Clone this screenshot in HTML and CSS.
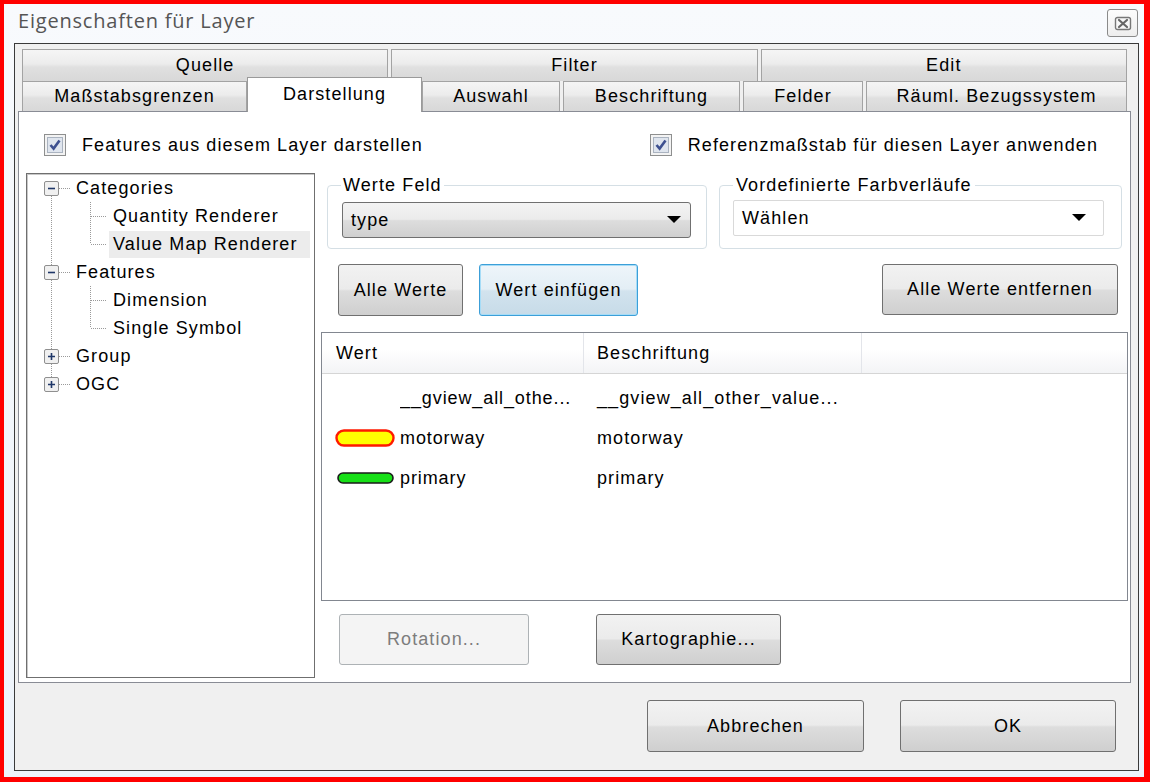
FILE: index.html
```html
<!DOCTYPE html>
<html lang="de">
<head>
<meta charset="utf-8">
<title>Eigenschaften für Layer</title>
<link rel="stylesheet" href="styles.css">
</head>
<body>
<div class="window">
  <div class="titlebar">
    <span class="title">Eigenschaften für Layer</span>
    <div class="close">
      <svg width="18" height="15" viewBox="0 0 18 15"><rect x="1.5" y="1.5" width="15" height="12" rx="2" fill="#f7f7f7" stroke="#777" stroke-width="1.4"/><path d="M5 4 L13 11 M13 4 L5 11" stroke="#666" stroke-width="2.2" stroke-linecap="round"/></svg>
    </div>
  </div>
  <div class="dialog">
    <div class="tabs">
      <div class="tabrow row1">
        <div class="tab">Quelle</div>
        <div class="tab">Filter</div>
        <div class="tab">Edit</div>
      </div>
      <div class="tabrow row2">
        <div class="tab t-mass">Maßstabsgrenzen</div>
        <div class="tab t-dar selected">Darstellung</div>
        <div class="tab t-aus">Auswahl</div>
        <div class="tab t-bes">Beschriftung</div>
        <div class="tab t-fel">Felder</div>
        <div class="tab t-rau">Räuml. Bezugssystem</div>
      </div>
    </div>
    <div class="panel">
      <div class="checks">
        <div class="check">
          <svg class="cb" width="22" height="22" viewBox="0 0 22 22"><rect x="0.5" y="0.5" width="21" height="21" fill="#f3f3f3" stroke="#8e8f8f"/><rect x="3.5" y="3.5" width="15" height="15" fill="#dfe5ee" stroke="#aab3c0"/><path d="M6.5 11 L9.6 14.6 L15.5 6.5" fill="none" stroke="#3d5090" stroke-width="2.6"/></svg>
          <span>Features aus diesem Layer darstellen</span>
        </div>
        <div class="check">
          <svg class="cb" width="22" height="22" viewBox="0 0 22 22"><rect x="0.5" y="0.5" width="21" height="21" fill="#f3f3f3" stroke="#8e8f8f"/><rect x="3.5" y="3.5" width="15" height="15" fill="#dfe5ee" stroke="#aab3c0"/><path d="M6.5 11 L9.6 14.6 L15.5 6.5" fill="none" stroke="#3d5090" stroke-width="2.6"/></svg>
          <span>Referenzmaßstab für diesen Layer anwenden</span>
        </div>
      </div>
      <div class="main">
        <div class="tree">
          <div class="node">
            <svg class="guide top" width="49" height="28" viewBox="0 0 49 28"><path d="M24.5 22 V28 M32 14.5 H44" stroke="#9a9a9a" stroke-dasharray="1 1"/><rect x="17.5" y="7.5" width="14" height="14" rx="1.5" fill="#f0f0f0" stroke="#8f8f8f"/><path d="M21 14.5 H28" stroke="#1f3768" stroke-width="1.6"/></svg>
            <span class="lbl">Categories</span>
          </div>
          <div class="node">
            <svg class="guide child" width="82" height="28" viewBox="0 0 82 28"><path d="M24.5 0 V28 M63.5 0 V28 M64 14.5 H80" stroke="#9a9a9a" stroke-dasharray="1 1"/></svg>
            <span class="lbl sub">Quantity Renderer</span>
          </div>
          <div class="node">
            <svg class="guide child" width="82" height="28" viewBox="0 0 82 28"><path d="M24.5 0 V28 M63.5 0 V14 M64 14.5 H80" stroke="#9a9a9a" stroke-dasharray="1 1"/></svg>
            <span class="lbl sub hl">Value Map Renderer</span>
          </div>
          <div class="node">
            <svg class="guide top" width="49" height="28" viewBox="0 0 49 28"><path d="M24.5 0 V7 M24.5 22 V28 M32 14.5 H44" stroke="#9a9a9a" stroke-dasharray="1 1"/><rect x="17.5" y="7.5" width="14" height="14" rx="1.5" fill="#f0f0f0" stroke="#8f8f8f"/><path d="M21 14.5 H28" stroke="#1f3768" stroke-width="1.6"/></svg>
            <span class="lbl">Features</span>
          </div>
          <div class="node">
            <svg class="guide child" width="82" height="28" viewBox="0 0 82 28"><path d="M24.5 0 V28 M63.5 0 V28 M64 14.5 H80" stroke="#9a9a9a" stroke-dasharray="1 1"/></svg>
            <span class="lbl sub">Dimension</span>
          </div>
          <div class="node">
            <svg class="guide child" width="82" height="28" viewBox="0 0 82 28"><path d="M24.5 0 V28 M63.5 0 V14 M64 14.5 H80" stroke="#9a9a9a" stroke-dasharray="1 1"/></svg>
            <span class="lbl sub">Single Symbol</span>
          </div>
          <div class="node">
            <svg class="guide top" width="49" height="28" viewBox="0 0 49 28"><path d="M24.5 0 V7 M24.5 22 V28 M32 14.5 H44" stroke="#9a9a9a" stroke-dasharray="1 1"/><rect x="17.5" y="7.5" width="14" height="14" rx="1.5" fill="#f0f0f0" stroke="#8f8f8f"/><path d="M21 14.5 H28 M24.5 11 V18" stroke="#1f3768" stroke-width="1.6"/></svg>
            <span class="lbl">Group</span>
          </div>
          <div class="node">
            <svg class="guide top" width="49" height="28" viewBox="0 0 49 28"><path d="M24.5 0 V7 M32 14.5 H44" stroke="#9a9a9a" stroke-dasharray="1 1"/><rect x="17.5" y="7.5" width="14" height="14" rx="1.5" fill="#f0f0f0" stroke="#8f8f8f"/><path d="M21 14.5 H28 M24.5 11 V18" stroke="#1f3768" stroke-width="1.6"/></svg>
            <span class="lbl">OGC</span>
          </div>
        </div>
        <div class="right">
          <div class="groups">
            <fieldset class="grp grp1">
              <legend>Werte Feld</legend>
              <div class="combo combo-btn">
                <span>type</span>
                <svg width="14" height="8" viewBox="0 0 14 8"><path d="M0 0 H14 L7 7 Z" fill="#000"/></svg>
              </div>
            </fieldset>
            <fieldset class="grp grp2">
              <legend>Vordefinierte Farbverläufe</legend>
              <div class="combo combo-flat">
                <span>Wählen</span>
                <svg width="14" height="8" viewBox="0 0 14 8"><path d="M0 0 H14 L7 7 Z" fill="#000"/></svg>
              </div>
            </fieldset>
          </div>
          <div class="btnrow">
            <div class="btn b-alle">Alle Werte</div>
            <div class="btn b-einf focus">Wert einfügen</div>
            <div class="btn b-entf">Alle Werte entfernen</div>
          </div>
          <div class="list">
            <div class="lhead">
              <div class="c1">Wert</div>
              <div class="c2">Beschriftung</div>
              <div class="c3"></div>
            </div>
            <div class="lrows">
              <div class="lrow">
                <div class="c1"><span class="sym"></span><span class="txt">__gview_all_othe...</span></div>
                <div class="c2">__gview_all_other_value...</div>
              </div>
              <div class="lrow">
                <div class="c1"><span class="sym"><svg width="60" height="18" viewBox="0 0 60 18"><rect x="1.5" y="1.5" width="57" height="15" rx="7.5" fill="#ffff00" stroke="#ff1a00" stroke-width="2.4"/></svg></span><span class="txt">motorway</span></div>
                <div class="c2">motorway</div>
              </div>
              <div class="lrow">
                <div class="c1"><span class="sym"><svg width="60" height="18" viewBox="0 0 60 18"><rect x="3" y="4" width="55" height="10" rx="5" fill="#17e017" stroke="#1a1a1a" stroke-width="1.6"/></svg></span><span class="txt">primary</span></div>
                <div class="c2">primary</div>
              </div>
            </div>
          </div>
          <div class="btnrow lower">
            <div class="btn disabled b-rot">Rotation...</div>
            <div class="btn b-kart">Kartographie...</div>
          </div>
        </div>
      </div>
    </div>
    <div class="footer">
      <div class="btn b-abb">Abbrechen</div>
      <div class="btn b-ok">OK</div>
    </div>
  </div>
</div>
</body>
</html>
```
FILE: styles.css
```css
* { box-sizing: border-box; }
html, body { margin: 0; padding: 0; }
body {
  font-family: "Liberation Sans", Arial, sans-serif;
  font-size: 18px;
  letter-spacing: 1.1px;
  color: #000;
  background: #fff;
}
.window {
  width: 1150px;
  height: 782px;
  border-style: solid;
  border-color: #ff0000;
  border-width: 4px 6px 5px 4px;
  background: linear-gradient(#f8fafd, #edf3fa);
  display: flex;
  flex-direction: column;
}
.titlebar {
  height: 39px;
  flex: none;
  display: flex;
  align-items: flex-start;
  padding-left: 14px;
}
.title {
  font-family: "Open Sans", "Noto Sans", sans-serif;
  font-size: 20px;
  letter-spacing: 0.8px;
  color: #555;
  line-height: 26px;
  margin-top: 4px;
}
.close {
  margin-left: auto;
  margin-right: 6px;
  margin-top: 5px;
  width: 31px;
  height: 28px;
  border: 1px solid #8a8a8a;
  border-radius: 3px;
  background: linear-gradient(#fcfcfc, #eeeeee);
  display: flex;
  align-items: center;
  justify-content: center;
}
.dialog {
  flex: 1;
  margin: 0 5px 6px 10px;
  border: 1px solid #3a3a3a;
  background: #f0f0f0;
  display: flex;
  flex-direction: column;
  padding: 5px 7px 0 3px;
}
.tabs { margin: 0 4px; flex: none; }
.tabrow { display: flex; gap: 3px; }
.row1 { height: 32px; }
.row2 { height: 30px; }
.tab {
  border: 1px solid #a3a3a3;
  border-bottom: none;
  background: linear-gradient(#f5f5f5, #ececec 45%, #e0e0e0 55%, #d8d8d8);
  display: flex;
  align-items: center;
  justify-content: center;
  white-space: nowrap;
}
.row1 .tab { flex: 1; }
.t-mass { width: 225px; }
.t-dar { width: 175px; }
.t-aus { width: 138px; }
.t-bes { width: 177px; }
.t-fel { width: 120px; }
.t-rau { flex: 1; }
.tab.selected {
  position: relative;
  z-index: 1;
  margin: -4px -3px -1px;
  background: #fff;
  border-color: #9a9a9a;
  padding-bottom: 2px;
}
.panel {
  height: 572px;
  flex: none;
  border: 1px solid #898c95;
  background: #fff;
  padding: 22px 2px 4px 7px;
}
.checks {
  height: 22px;
  margin-bottom: 17px;
  padding: 0 30px 0 18px;
  display: flex;
  justify-content: space-between;
  align-items: center;
}
.check { display: flex; align-items: center; gap: 16px; white-space: nowrap; }
.cb { flex: none; display: block; }
.main {
  height: 505px;
  display: flex;
  gap: 6px;
}
.tree {
  width: 289px;
  flex: none;
  border: 1px solid #6f6f6f;
  box-shadow: inset 1px 1px 0 #c8c8c8;
  background: #fff;
}
.node {
  height: 28px;
  display: flex;
  align-items: center;
  white-space: nowrap;
}
.guide { flex: none; display: block; }
.lbl { line-height: 27px; }
.lbl.sub { padding: 0 4px; }
.hl {
  background: #ececec;
  flex: 1;
  margin-right: 4px;
}
.right {
  flex: 1;
  display: flex;
  flex-direction: column;
}
.groups {
  display: flex;
  margin-top: 2px;
}
.grp {
  margin: 0;
  border: 1px solid #d5dfe5;
  border-radius: 4px;
  min-width: 0;
}
.grp legend {
  line-height: 20px;
  padding: 0 2px;
  margin-left: -1px;
}
.grp1 {
  width: 380px;
  margin-left: 6px;
  padding: 7px 15px 10px 14px;
}
.grp2 {
  flex: 1;
  margin-left: 12px;
  margin-right: 6px;
  padding: 5px 17px 12px 13px;
}
.grp2 legend { padding: 0 3px; margin-left: 0; }
.combo {
  height: 36px;
  display: flex;
  align-items: center;
  justify-content: space-between;
  padding: 0 9px 0 8px;
}
.combo svg { display: block; }
.combo-btn {
  border: 1px solid #707070;
  border-radius: 3px;
  background: linear-gradient(#f3f3f3, #ebebeb 48%, #dddddd 52%, #d0d0d0);
}
.combo-flat {
  border: 1px solid #d9d9d9;
  border-radius: 2px;
  background: #fff;
  padding-right: 17px;
}
.btnrow {
  display: flex;
  height: 52px;
  margin-top: 15px;
  flex: none;
}
.btn {
  height: 100%;
  border: 1px solid #707070;
  border-radius: 3px;
  background: linear-gradient(#f2f2f2, #ebebeb 48%, #dddddd 52%, #cfcfcf);
  display: flex;
  align-items: center;
  justify-content: center;
  white-space: nowrap;
}
.btn.focus {
  border-color: #3c9fd8;
  box-shadow: inset 0 0 0 1px #a6dcf7;
  background: linear-gradient(#eef5fa, #e3eef5 48%, #d2e3ee 52%, #c7dbe8);
}
.btn.disabled {
  border-color: #adb2b5;
  background: #f4f4f4;
  color: #7d7d7d;
}
.b-alle { width: 125px; margin-left: 17px; }
.b-einf { width: 159px; margin-left: 16px; }
.b-entf { width: 236px; margin-left: auto; margin-right: 10px; height: 51px; }
.list {
  margin-top: 16px;
  height: 269px;
  flex: none;
  border: 1px solid #828790;
  background: #fff;
}
.lhead {
  height: 41px;
  display: flex;
  border-bottom: 1px solid #d5d5d5;
  background: linear-gradient(#ffffff, #ffffff 40%, #f3f4f6);
}
.lhead > div {
  display: flex;
  align-items: center;
  border-right: 1px solid #e3e5ea;
}
.c1 { width: 262px; padding-left: 14px; flex: none; }
.c2 { width: 278px; padding-left: 13px; flex: none; }
.lhead .c3 { flex: 1; border-right: none; }
.lrows { padding-top: 4px; }
.lrow {
  height: 40px;
  display: flex;
  align-items: center;
  white-space: nowrap;
}
.lrow > div { display: flex; align-items: center; overflow: hidden; }
.sym { width: 64px; flex: none; display: flex; align-items: center; }
.sym svg { display: block; margin-left: -1px; }
.txt { overflow: hidden; letter-spacing: 0.9px; }
.btnrow.lower { height: 51px; margin-top: 13px; }
.b-rot { width: 190px; margin-left: 18px; }
.b-kart { width: 185px; margin-left: 67px; }
.footer {
  flex: 1;
  display: flex;
  justify-content: flex-end;
  align-items: flex-start;
  gap: 36px;
  padding: 17px 15px 0 0;
}
.footer .btn { height: 52px; }
.b-abb { width: 217px; }
.b-ok { width: 216px; }
```
